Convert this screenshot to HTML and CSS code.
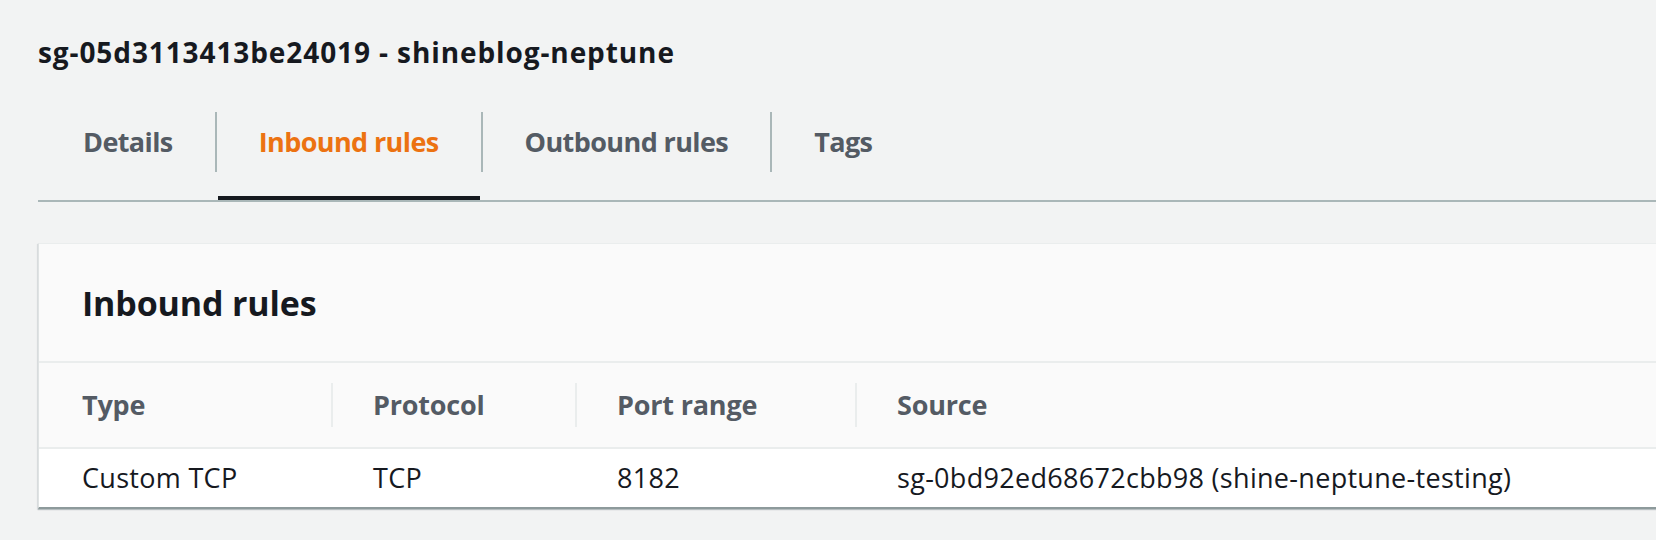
FILE: index.html
```html
<!DOCTYPE html>
<html lang="en">
<head>
<meta charset="utf-8">
<title>sg-05d3113413be24019 - shineblog-neptune</title>
<link rel="stylesheet" href="styles.css">
</head>
<body>
<main class="page">
  <h1 class="title">sg-05d3113413be24019 - shineblog-neptune</h1>
  <nav class="tabs">
    <div class="tab tab-first"><span class="tab-label">Details</span></div>
    <div class="tab tab-active"><span class="tab-label">Inbound rules</span></div>
    <div class="tab"><span class="tab-label">Outbound rules</span></div>
    <div class="tab"><span class="tab-label">Tags</span></div>
  </nav>
  <section class="panel">
    <header class="panel-header">
      <h2 class="panel-title">Inbound rules</h2>
    </header>
    <div class="grid">
      <div class="th th-first"><span class="th-label">Type</span></div>
      <div class="th"><span class="th-label">Protocol</span></div>
      <div class="th"><span class="th-label">Port range</span></div>
      <div class="th"><span class="th-label">Source</span></div>
      <div class="td td-first">Custom TCP</div>
      <div class="td">TCP</div>
      <div class="td">8182</div>
      <div class="td">sg-0bd92ed68672cbb98 (shine-neptune-testing)</div>
    </div>
  </section>
</main>
</body>
</html>
```

FILE: styles.css
```css
html {
  margin: 0;
  padding: 0;
  background: #f2f3f3;
  overflow: hidden;
}

body {
  margin: 0;
  padding: 0;
  min-height: 540px;
  font-family: "Open Sans", Roboto, "Liberation Sans", sans-serif;
  color: #16191f;
}

.page {
  padding: 35px 0 0 38px;
}

.title {
  margin: 0;
  font-size: 28px;
  line-height: 34px;
  font-weight: 700;
  letter-spacing: 0.9px;
  color: #16191f;
}

.tabs {
  display: flex;
  margin-top: 43px;
  border-bottom: 2px solid #aab7b8;
}

.tab {
  position: relative;
  padding-bottom: 28px;
}

.tab-label {
  display: block;
  height: 60px;
  line-height: 60px;
  padding: 0 42px;
  border-left: 2px solid #aab7b8;
  font-size: 27px;
  font-weight: 700;
  letter-spacing: -0.6px;
  color: #545b64;
  white-space: nowrap;
}

.tab-first .tab-label {
  border-left: none;
  padding-left: 45px;
}

.tab-active .tab-label {
  color: #ec7211;
}

.tab-active::after {
  content: "";
  position: absolute;
  left: 3px;
  right: 1px;
  bottom: 0;
  height: 4px;
  background: #16191f;
}

.panel {
  margin-top: 41px;
  margin-right: -6px;
  background: #ffffff;
  border-top: 1px solid #eaeded;
  border-left: 1px solid #dfe3e3;
  border-bottom: 2px solid #8d9a9b;
  box-shadow: 0 1px 1px 0 rgba(0, 28, 36, 0.18), -1px 1px 1px 0 rgba(0, 28, 36, 0.08);
}

.panel-header {
  background: #fafafa;
  height: 117px;
  border-bottom: 2px solid #eaeded;
  display: flex;
  align-items: center;
  padding-left: 43px;
}

.panel-title {
  margin: 0;
  font-size: 34px;
  line-height: 40px;
  font-weight: 700;
  letter-spacing: -0.15px;
  color: #16191f;
}

.grid {
  display: grid;
  grid-template-columns: 292px 244px 280px 1fr;
}

.th {
  background: #fafafa;
  height: 84px;
  display: flex;
  align-items: center;
  border-bottom: 2px solid #eaeded;
}

.th-label {
  display: block;
  height: 44px;
  line-height: 44px;
  padding-left: 40px;
  border-left: 2px solid #eaeded;
  font-size: 27px;
  font-weight: 700;
  letter-spacing: -0.2px;
  color: #545b64;
  white-space: nowrap;
}

.th-first .th-label {
  border-left: none;
  padding-left: 43px;
}

.td {
  height: 58px;
  line-height: 58px;
  padding-left: 42px;
  font-size: 27px;
  letter-spacing: 0.3px;
  color: #16191f;
  white-space: nowrap;
}

.td-first {
  padding-left: 43px;
}
```
